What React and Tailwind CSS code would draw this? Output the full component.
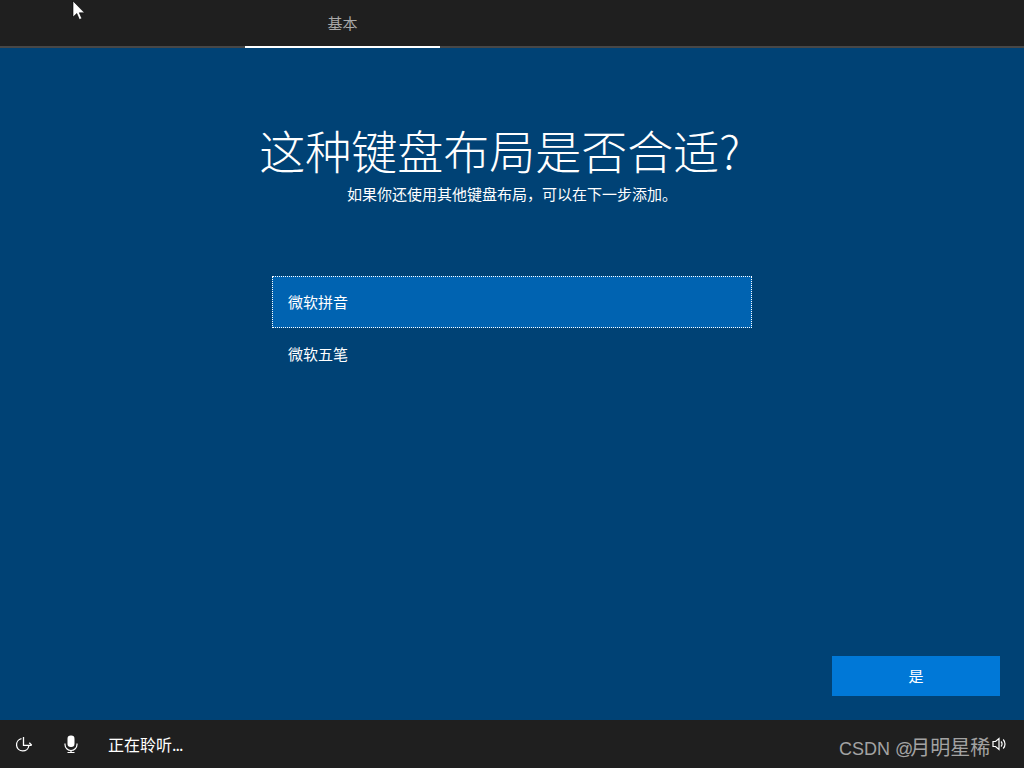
const font = { fontFamily: '"Noto Sans CJK SC", "Liberation Sans", sans-serif' };

function Cursor() {
  return (
    <svg className="absolute left-[72px] top-0" width="14" height="20" viewBox="0 0 14 20">
      <path d="M1 1v16l3.800-3.500 2.600 6 2.400-1-2.500-5.700h5.200z" fill="#fff" stroke="#000" strokeWidth="0.6" />
    </svg>
  );
}

function ClockIcon() {
  return (
    <svg width="18" height="18" viewBox="0 0 18 18" fill="none" stroke="#fff" strokeWidth="1.300">
      <path d="M6.500 3.700a6.200 6.200 0 1 0 7.400 6.800" />
      <path d="M8.500 2v8.300h8" />
      <path d="M14.300 7.800l2.400 2.500" />
    </svg>
  );
}

function MicIcon() {
  return (
    <svg width="14" height="18" viewBox="0 0 14 18" fill="none">
      <rect x="3.500" y="0.500" width="7" height="11.500" rx="3.200" fill="#fff" />
      <path d="M1 8.500v1a6 6 0 0 0 12 0v-1" stroke="#fff" strokeWidth="1.200" />
      <path d="M7 15.500v2M3.500 17.500h7" stroke="#fff" strokeWidth="1.200" />
    </svg>
  );
}

function SpeakerIcon() {
  return (
    <svg width="15" height="14" viewBox="0 0 15 14" fill="none" stroke="#fff" strokeWidth="1.200">
      <path d="M1 4.500h2.500L7 1.500v11L3.500 9.500H1z" />
      <path d="M9 4.500a3.500 3.500 0 0 1 0 5M11.200 2.500a6.500 6.500 0 0 1 0 9" />
    </svg>
  );
}

export default function App() {
  return (
    <div className="relative flex h-[768px] w-[1024px] flex-col overflow-hidden bg-[#004275] text-white" style={font}>
      <Cursor />
      <header className="flex h-12 shrink-0 border-b-2 border-[#474747] bg-[#1f1f1f] pl-[245px]">
        <div className="-mb-[2px] flex h-12 w-[195px] items-center justify-center border-b-2 border-white text-[15px] text-[#a8a8a8]">
          基本
        </div>
      </header>

      <main className="flex min-h-0 flex-1 flex-col items-center pt-[67px]">
        <h1 className="mr-[25px] text-[46px] font-light leading-[68px]">这种键盘布局是否合适?</h1>
        <p className="mt-[1px] text-[15px] leading-5">{"如果你还使用其他键盘布局\uFF0C可以在下一步添加。"}</p>

        <ul className="mt-[72px] w-[480px] text-[15px]">
          <li className="flex h-[52px] items-center border border-dotted border-white bg-[#0063b1] pl-[15px]">微软拼音</li>
          <li className="flex h-[52px] items-center pl-4">微软五笔</li>
        </ul>

        <div className="mt-auto flex w-full justify-end pb-6 pr-6">
          <button className="h-10 w-[168px] bg-[#0078d7] text-[15px]">是</button>
        </div>
      </main>

      <footer className="relative flex h-12 shrink-0 items-center bg-[#1f1f1f]">
        <div className="ml-[15px] flex w-[18px] justify-center"><ClockIcon /></div>
        <div className="ml-[31px] flex w-[14px] justify-center"><MicIcon /></div>
        <span className="ml-[30px] text-base">正在聆听<span className="tracking-[-1px]">...</span></span>
        <div className="ml-auto mr-[17px] flex"><SpeakerIcon /></div>
        <span className="absolute left-[839px] top-[16px] text-lg leading-6 text-[#a3a3a3]" style={{ fontFamily: '"Liberation Sans", "Noto Sans CJK SC", sans-serif' }}>CSDN @<span className="-ml-[3px] text-[20px]">月明星稀</span></span>
      </footer>
    </div>
  );
}
